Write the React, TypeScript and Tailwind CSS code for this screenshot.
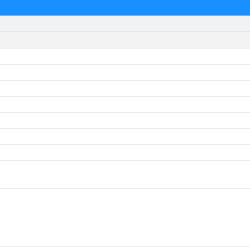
import React from "react";

const rows = [0, 1, 2, 3, 4, 5, 6];

export default function App() {
  return (
    <div className="w-[250px] h-[250px] bg-white overflow-hidden flex flex-col font-['Liberation_Sans',sans-serif]">
      {/* Top bar */}
      <div className="h-[15px] bg-[#1890ff]" />
      <div className="h-[1px] bg-[#6ab4ff]" />

      {/* Toolbar strip */}
      <div className="h-[16px] bg-[#f0f2f3] border-b border-[#e6e6e6]" />

      {/* Table header */}
      <div className="h-[17px] bg-[#f3f3f3] border-b border-[#f0f0f0]" />

      {/* Rows */}
      {rows.map((r) => (
        <div key={r} className="h-[16px] border-b border-[#ebebeb]" />
      ))}
      <div className="h-[28px] border-b border-[#ebebeb]" />
      <div className="flex-1" />
      <div className="h-[4px] border-t border-[#f0f0f0]" />
    </div>
  );
}
